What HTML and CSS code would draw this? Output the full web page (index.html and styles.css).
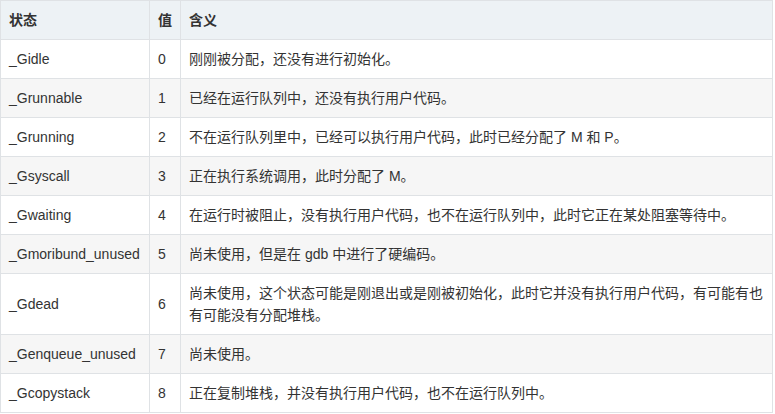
FILE: index.html
```html
<!DOCTYPE html>
<html lang="zh-CN">
<head>
<meta charset="utf-8">
<title>G 状态</title>
<link rel="stylesheet" href="styles.css">
</head>
<body>
<table class="states">
  <colgroup>
    <col class="c-name">
    <col class="c-val">
    <col class="c-desc">
  </colgroup>
  <thead>
    <tr><th>状态</th><th>值</th><th>含义</th></tr>
  </thead>
  <tbody>
    <tr><td>_Gidle</td><td>0</td><td>刚刚被分配，还没有进行初始化。</td></tr>
    <tr><td>_Grunnable</td><td>1</td><td>已经在运行队列中，还没有执行用户代码。</td></tr>
    <tr><td>_Grunning</td><td>2</td><td>不在运行队列里中，已经可以执行用户代码，此时已经分配了 M 和 P。</td></tr>
    <tr><td>_Gsyscall</td><td>3</td><td>正在执行系统调用，此时分配了 M。</td></tr>
    <tr><td>_Gwaiting</td><td>4</td><td>在运行时被阻止，没有执行用户代码，也不在运行队列中，此时它正在某处阻塞等待中。</td></tr>
    <tr><td>_Gmoribund_unused</td><td>5</td><td>尚未使用，但是在 gdb 中进行了硬编码。</td></tr>
    <tr><td>_Gdead</td><td>6</td><td>尚未使用，这个状态可能是刚退出或是刚被初始化，此时它并没有执行用户代码，有可能有也有可能没有分配堆栈。</td></tr>
    <tr><td>_Genqueue_unused</td><td>7</td><td>尚未使用。</td></tr>
    <tr><td>_Gcopystack</td><td>8</td><td>正在复制堆栈，并没有执行用户代码，也不在运行队列中。</td></tr>
  </tbody>
</table>
</body>
</html>
```

FILE: styles.css
```css
html, body {
  margin: 0;
  padding: 0;
  background: #ffffff;
}

.states {
  border-collapse: collapse;
  table-layout: fixed;
  width: 773px;
  font-family: "Liberation Sans", "Noto Sans CJK SC", sans-serif;
  font-size: 14px;
  line-height: 22px;
  color: #333333;
}

.c-name { width: 149px; }
.c-val { width: 31px; }
.c-desc { width: auto; }

.states th,
.states td {
  border: 1px solid #dfe2e5;
  padding: 8px 8px;
  text-align: left;
  vertical-align: middle;
}

.states th {
  background: #edf2f5;
  font-weight: bold;
}

.states tbody tr:nth-child(even) td {
  background: #f6f6f6;
}
```
